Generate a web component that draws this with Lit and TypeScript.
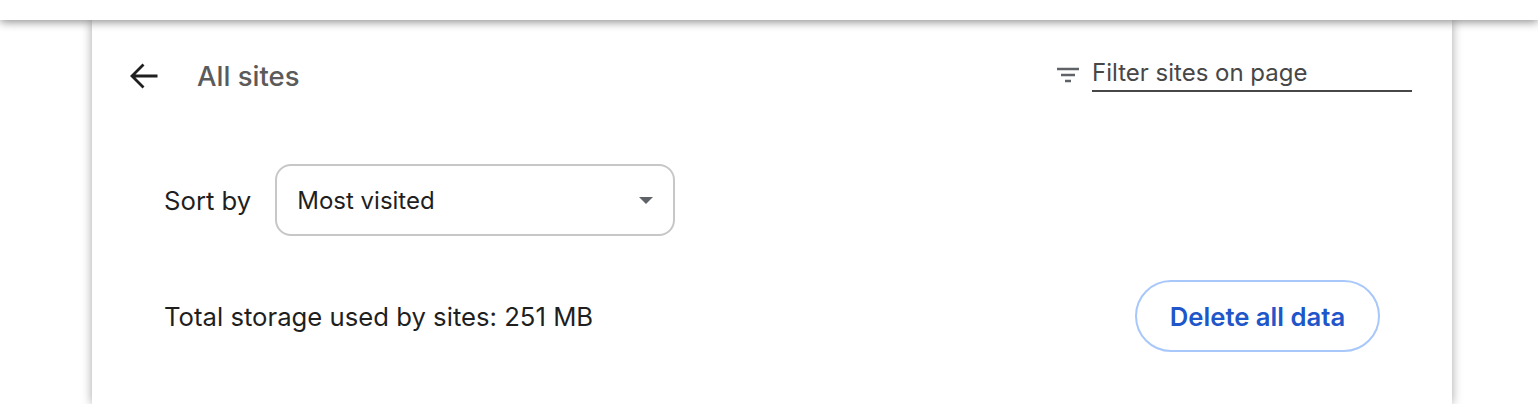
import { LitElement, html, css } from "lit";
import { customElement } from "lit/decorators.js";

@customElement("app-root")
export class AppRoot extends LitElement {
  static styles = css`
    :host { display: block; height: 404px; overflow: hidden; background: #fff; font-family: Inter, "Liberation Sans", sans-serif; color: #1f1f1f; }
    .topbar { position: relative; z-index: 2; height: 20px; background: #fff; box-shadow: 0 2px 10px rgba(0,0,0,.45); }
    .card { box-sizing: border-box; width: 1360px; height: 384px; margin-left: 92px; background: #fff; box-shadow: 0 0 10px rgba(0,0,0,.36); display: flex; flex-direction: column; padding: 0 40px 0 36px; }
    .header { display: flex; align-items: center; height: 72px; margin-top: 20px; }
    .back { width: 32px; height: 32px; display: block; flex: none; }
    .title { margin-left: 37px; font-size: 27.5px; font-weight: 500; color: #5b5b5b; flex: 1; }
    .filter { display: flex; align-items: center; gap: 12px; }
    .filter svg { width: 24px; height: 24px; display: block; margin-bottom: 2px; }
    .field { box-sizing: border-box; width: 320px; height: 32px; border-bottom: 2px solid #474747; font-size: 24px; color: #474747; line-height: 26px; }
    .sort { display: flex; align-items: center; gap: 24px; margin: 52px 0 0 36px; font-size: 25.7px; }
    .select { box-sizing: border-box; width: 400px; height: 72px; border: 2px solid #c7c7c7; border-radius: 16px; display: flex; align-items: center; justify-content: space-between; padding: 0 20px 0 20px; font-size: 24px; }
    .caret { width: 0; height: 0; border-left: 7px solid transparent; border-right: 7px solid transparent; border-top: 7px solid #5f6368; }
    .total { display: flex; align-items: center; justify-content: space-between; margin: 44px 32px 0 36px; font-size: 25.7px; }
    .btn { box-sizing: border-box; width: 245px; height: 72px; border: 2px solid #a8c7fa; border-radius: 36px; display: flex; align-items: center; justify-content: center; color: #1f56c9; font-weight: 600; font-size: 25.7px; }
  `;

  render() {
    return html`
      <div class="topbar"></div>
      <div class="card">
        <div class="header">
          <svg class="back" viewBox="0 0 32 32"><path d="M29.5 16H5M15.5 4.5L4 16l11.5 11.5" fill="none" stroke="#1f1f1f" stroke-width="2.8" /></svg>
          <div class="title">All sites</div>
          <div class="filter">
            <svg viewBox="0 0 24 24"><path d="M1 6h22M5 12h14M9 18h6" fill="none" stroke="#5f6368" stroke-width="2.3" /></svg>
            <div class="field">Filter sites on page</div>
          </div>
        </div>
        <div class="sort">
          <span>Sort by</span>
          <div class="select"><span>Most visited</span><span class="caret"></span></div>
        </div>
        <div class="total">
          <span>Total storage used by sites: 251 MB</span>
          <div class="btn">Delete all data</div>
        </div>
      </div>
    `;
  }
}
